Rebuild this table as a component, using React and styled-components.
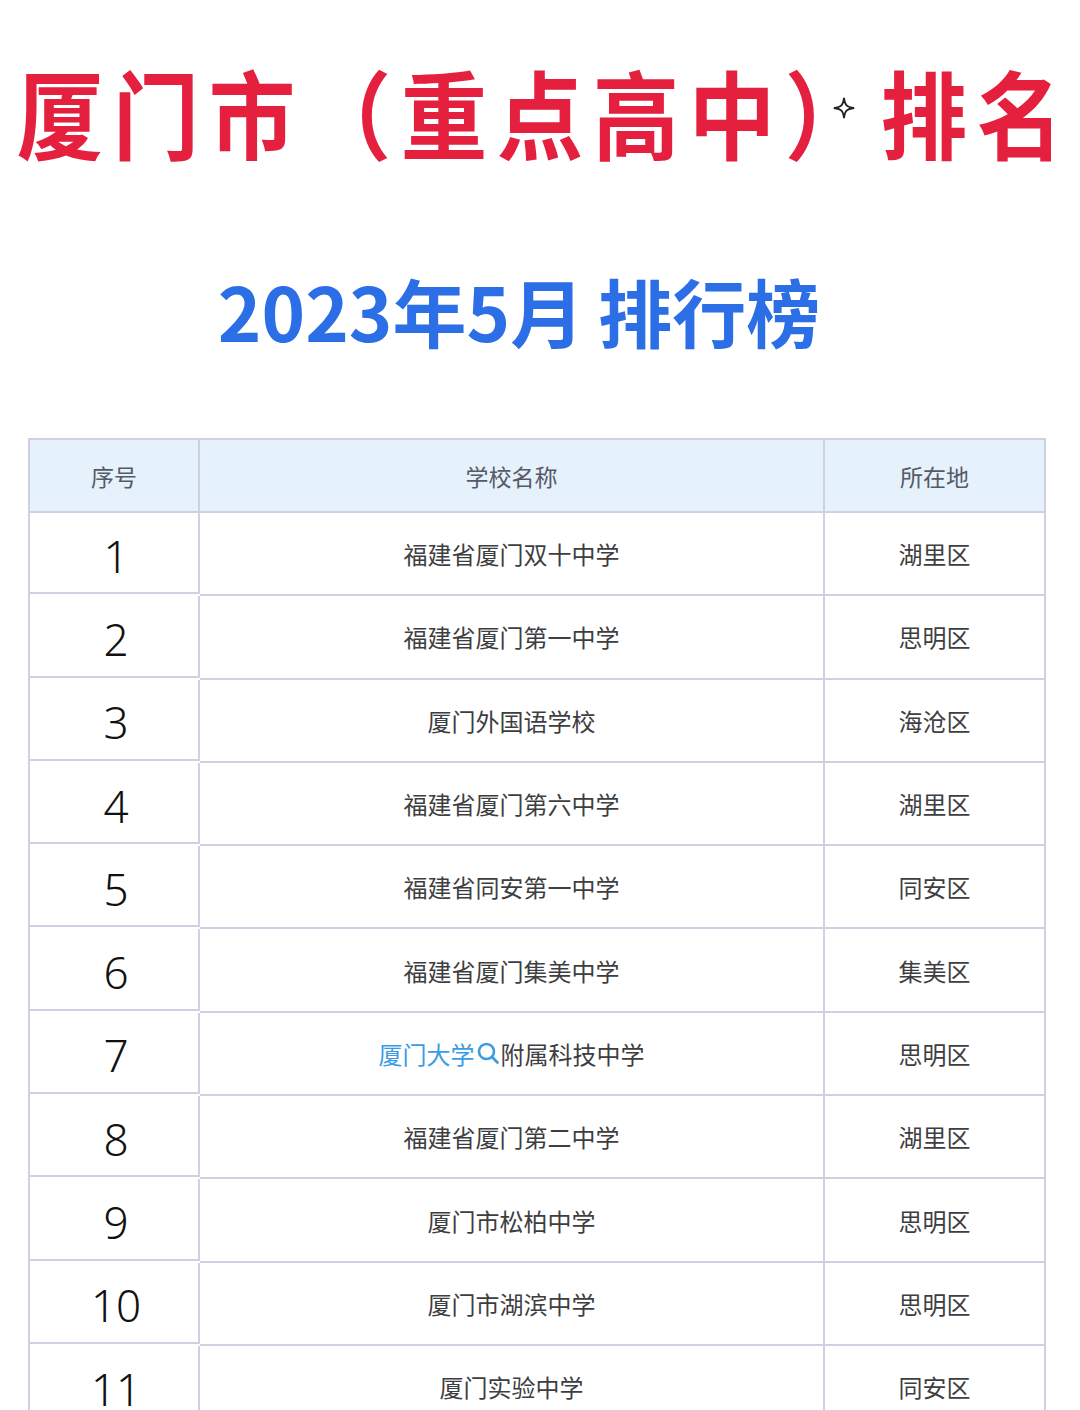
import React from "react";
import styled, { createGlobalStyle } from "styled-components";

const GlobalStyle = createGlobalStyle`
  html, body {
    margin: 0;
    padding: 0;
    background: #ffffff;
  }
  body {
    font-family: "Noto Sans CJK SC", "Noto Sans", sans-serif;
  }
`;

const Page = styled.div`
  width: 1080px;
  height: 1410px;
  overflow: hidden;
  display: flex;
  flex-direction: column;
  align-items: center;
`;

const Title = styled.h1`
  margin: 56px 0 0 0;
  align-self: flex-start;
  padding-left: 12px;
  display: flex;
  align-items: center;
  font-size: 96px;
  line-height: 110px;
  font-weight: 700;
  color: #e5203f;
  white-space: nowrap;
`;

const Glyph = styled.span`
  display: inline-block;
  width: 96px;
  text-align: center;
  transform: scaleX(0.9);
`;

const Star = styled.svg`
  width: 22px;
  height: 22px;
  margin: -6px 21px 0 -43px;
`;

const Subtitle = styled.h2`
  margin: 100px 0 0 -42px;
  display: flex;
  align-items: center;
  gap: 14px;
  font-size: 74px;
  line-height: 88px;
  font-weight: 700;
  color: #2b6ee6;
  white-space: nowrap;
`;

const Table = styled.div`
  margin-top: 84px;
  align-self: flex-start;
  margin-left: 28px;
  width: 1016px;
  display: grid;
  grid-template-columns: 170px 625px 221px;
  border-top: 2px solid #d0d0e2;
  border-left: 2px solid #d0d0e2;
`;

const Cell = styled.div`
  height: ${(p) => (p.$head ? "71px" : "81.3px")};
  display: flex;
  align-items: center;
  justify-content: center;
  border-right: 2px solid #d0d0e2;
  border-bottom: 2px solid #d0d0e2;
  background: ${(p) => (p.$head ? "#e5f1fb" : "#ffffff")};
  color: ${(p) => (p.$head ? "#555a66" : "#3e3e42")};
  font-size: ${(p) => (p.$head ? "23px" : "24px")};
  white-space: nowrap;
`;

const Num = styled(Cell)`
  font-family: "Noto Sans", "Open Sans", sans-serif;
  font-weight: 300;
  font-size: 44px;
  color: #111111;
  padding: 6px 0 0 4px;
  box-sizing: border-box;
`;

const Link = styled.span`
  color: #3d9be4;
  display: inline-flex;
  align-items: center;
`;

const SearchIcon = styled.svg`
  width: 24px;
  height: 24px;
  margin: 0 1px 0 1px;
`;

const rows = [
  ["1", "福建省厦门双十中学", "湖里区"],
  ["2", "福建省厦门第一中学", "思明区"],
  ["3", "厦门外国语学校", "海沧区"],
  ["4", "福建省厦门第六中学", "湖里区"],
  ["5", "福建省同安第一中学", "同安区"],
  ["6", "福建省厦门集美中学", "集美区"],
  ["7", null, "思明区"],
  ["8", "福建省厦门第二中学", "湖里区"],
  ["9", "厦门市松柏中学", "思明区"],
  ["10", "厦门市湖滨中学", "思明区"],
  ["11", "厦门实验中学", "同安区"],
];

const App = () => {
  const title = ["厦", "门", "市", "（", "重", "点", "高", "中", "）"];
  return (
    <Page>
      <GlobalStyle />
      <Title>
        {title.map((c, i) => (
          <Glyph key={i}>{c}</Glyph>
        ))}
        <Star viewBox="0 0 24 24">
          <path
            d="M12 1 C13 9 15 11 23 12 C15 13 13 15 12 23 C11 15 9 13 1 12 C9 11 11 9 12 1 Z"
            fill="none"
            stroke="#222"
            strokeWidth="2"
          />
        </Star>
        <Glyph>排</Glyph>
        <Glyph>名</Glyph>
      </Title>
      <Subtitle>
        <span>2023年5月</span>
        <span>排行榜</span>
      </Subtitle>
      <Table>
        <Cell $head>序号</Cell>
        <Cell $head>学校名称</Cell>
        <Cell $head>所在地</Cell>
        {rows.map(([n, name, area]) => (
          <React.Fragment key={n}>
            <Num>{n}</Num>
            <Cell>
              {name ? (
                name
              ) : (
                <>
                  <Link>
                    厦门大学
                    <SearchIcon viewBox="0 0 24 24">
                      <circle cx="10.5" cy="10.5" r="7.5" fill="none" stroke="#3d9be4" strokeWidth="2.6" />
                      <path d="M16 16 L21.5 21.5" stroke="#3d9be4" strokeWidth="2.8" strokeLinecap="round" />
                    </SearchIcon>
                  </Link>
                  附属科技中学
                </>
              )}
            </Cell>
            <Cell>{area}</Cell>
          </React.Fragment>
        ))}
      </Table>
    </Page>
  );
};

export default App;
